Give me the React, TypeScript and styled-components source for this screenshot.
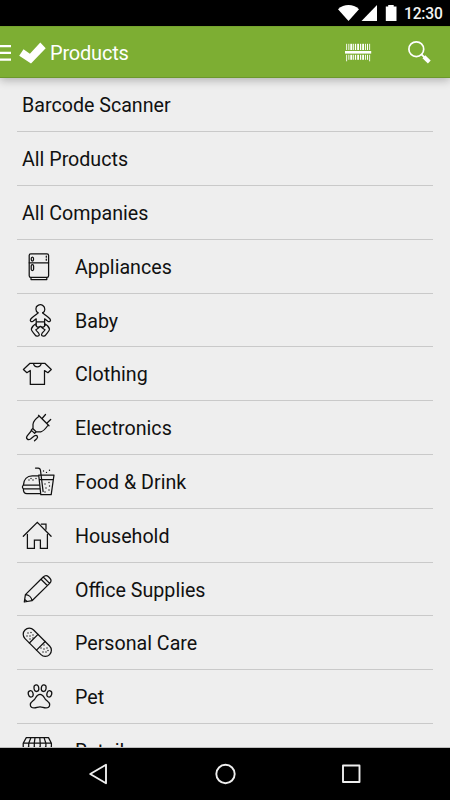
import React from "react";
import styled, { createGlobalStyle } from "styled-components";

const GlobalStyle = createGlobalStyle`
  * { box-sizing: border-box; }
  body { margin: 0; background: #000; font-family: Roboto, "Liberation Sans", sans-serif; }
`;

const Screen = styled.div`
  width: 450px;
  height: 800px;
  display: flex;
  flex-direction: column;
  overflow: hidden;
  background: #eeeeee;
`;

const StatusBar = styled.div`
  flex: 0 0 26px;
  background: #000;
  display: flex;
  align-items: center;
  justify-content: flex-end;
  padding: 2px 8px 0 0;
  color: #fff;
`;

const Clock = styled.span`
  font-size: 15.6px;
  line-height: 24px;
  font-weight: 500;
  letter-spacing: -0.2px;
  width: 38px;
  white-space: nowrap;
  color: #f4f4f4;
`;

const StatusIcons = styled.svg`
  width: 66px;
  height: 24px;
`;

const AppBar = styled.header`
  flex: 0 0 52.4px;
  display: flex;
  align-items: center;
  background: #7dae33;
  border-top: 1px solid #75a42e;
  border-bottom: 1px solid #6c982c;
  box-shadow: 0 2px 9px rgba(0, 0, 0, 0.28);
  z-index: 1;
`;

const Brand = styled.svg`
  width: 50px;
  height: 50px;
`;

const Title = styled.h1`
  flex: 1;
  margin: 0;
  font-size: 20px;
  line-height: 24px;
  font-weight: 400;
  letter-spacing: -0.2px;
  color: #fff;
  padding-top: 2px;
`;

const Actions = styled.svg`
  width: 110px;
  height: 50px;
`;

const List = styled.ul`
  flex: 1;
  min-height: 0;
  overflow: hidden;
  list-style: none;
  margin: 0;
  padding: 0 17px;
  border-bottom: 1px solid #bdbdbd;
`;

const Row = styled.li`
  height: 53.8px;
  padding-top: 1.2px;
  display: flex;
  align-items: center;
  border-bottom: 1px solid #c9c9c9;
`;

const Label = styled.span<{ $inset?: boolean }>`
  font-size: 19.65px;
  line-height: 26px;
  color: #111;
  white-space: nowrap;
  padding-top: 2.2px;
  padding-left: ${(p) => (p.$inset ? "17px" : "5px")};
`;

const Glyph = styled.svg`
  width: 40px;
  height: 44px;
  margin-left: 1px;
  fill: none;
  stroke: #111;
  stroke-width: 1.25;
  stroke-linejoin: round;
  stroke-linecap: round;
`;

const NavBar = styled.nav`
  flex: 0 0 52px;
  background: #000;
  display: flex;
  align-items: center;
  justify-content: space-between;
  padding: 0 86px;
`;

const NavIcon = styled.svg`
  width: 25px;
  height: 24px;
  fill: none;
  stroke: #eee;
  stroke-width: 1.9;
  stroke-linejoin: round;
`;

const dots = (points: number[][], r = 0.6) =>
  points.map(([x, y]) => <circle key={`${x}-${y}`} cx={x} cy={y} r={r} fill="#111" stroke="none" />);

const items: { label: string; icon?: React.ReactNode }[] = [
  { label: "Barcode Scanner" },
  { label: "All Products" },
  { label: "All Companies" },
  {
    label: "Appliances",
    icon: (
      <>
        <rect x="11.2" y="8.9" width="19.4" height="23.4" rx="1.6" />
        <path d="M11.2 17.8H30.6M13 32.5v2h15.8v-2M28.3 11v1.2M28.3 14v1.2" />
        <ellipse cx="14.4" cy="14" rx="1.2" ry="2" />
        <rect x="13.2" y="19.7" width="2.4" height="5.8" rx="1.2" />
      </>
    ),
  },
  {
    label: "Baby",
    icon: (
      <>
        <path d="M20 13.8C17.2 12 17.2 7.7 20 6.4c3.2-1.7 7 .2 6.8 4 0 1.6-.9 2.8-2.2 3.5" />
        <path d="M20 13.8C17.8 16.2 15.1 17.5 12.8 20c-1.4 1.8.5 3.4 2.2 2.2l3.2-2.4v6.9M24.8 13.8c2.2 2.4 4.9 3.7 7.2 6.2 1.4 1.8-.5 3.4-2.2 2.2l-3.2-2.4v6.9M18.2 22.8h8.5" />
        <path d="M18 24.8c-2 1-4.2 3-4.7 5.4-.2 1.5 2.2 3.6 3.7 5.6 1.5 2.4 5.3 1.2 4-1.1-.7-1.4-2.3-2.2-3.2-3.9 1.5-1.2 2.6-1.5 4.6-3.4 2 1.9 3.1 2.2 4.6 3.4-.9 1.7-2.5 2.5-3.2 3.9-1.3 2.3 2.5 3.5 4 1.1 1.5-2 3.9-4.1 3.7-5.6-.5-2.4-2.7-4.4-4.7-5.4M18 26.3c.6 2 2.3 2.4 4.4 1.1 2.1 1.3 3.8.9 4.6-1.1" />
      </>
    ),
  },
  {
    label: "Clothing",
    icon: (
      <path d="M12 11.3L5.4 17.5l3.5 3.2 3.4-2.2v13.9h14.2V18.5l3.4 2.2 3.4-3.2-6.5-6.2H12M15.4 11.3c1 4.6 6.8 4.6 7.9 0" />
    ),
  },
  {
    label: "Electronics",
    icon: (
      <path d="M20.5 9.3L31 19.8M21.3 10.1c-3 2.3-5.9 4.6-6.3 8.1v4.5l3.1 3.1h4.7c3-.6 5.3-3.8 7.4-6.8M24.5 12l3-3.5M29.3 16.7l3.4-3.2M14.8 22.3l-1.6 1.8 3.4 3.3 1.8-1.6M13.6 24.5l-4.4 5.3c-1.8 2.6.8 5 3.3 3.2l3.7-2.9c2.7-1.8 4.4.7 2.5 2.6l-2.2 2.1" />
    ),
  },
  {
    label: "Food & Drink",
    icon: (
      <>
        <path d="M20.2 15.9h-6c-5.2 0-8.5 3.6-8.8 9.2h16M5.4 25.2c-1.3 1-1.3 2.6 0 3.6h16.4M5.4 28.8c-.2 3 1 4.9 3.5 4.9h13" />
        <path d="M20.7 15h15.3l-2.8 19.7H22.8zM21.3 19.5h14M17.5 8h2.7c1.6 0 2.1.8 2.3 2.5l2.6 21" />
        {dots([[13, 18.5], [11, 20], [15, 20], [18, 18.5], [25.5, 11], [28.5, 12.4], [31.5, 10.2], [27, 24], [31, 22.5], [28, 28], [31, 30], [27, 32], [31.5, 26]], 0.7)}
      </>
    ),
  },
  {
    label: "Household",
    icon: (
      <path d="M5.3 22.3l14-14 13.8 14M9.4 20.4v14h7v-8.2h6v8.2h7v-14M23.3 10H28v5.2" strokeLinejoin="miter" />
    ),
  },
  {
    label: "Office Supplies",
    icon: (
      <path d="M6.3 34l1.1-7.4L25.2 9c2-2 3.8-1.7 5.3-.2l1.4 1.4c1.5 1.6 1.5 3.4-.2 5.2L14 32.7zM7.4 26.6c3.3.2 6.2 2.6 6.6 6.1M23 11.2l6.3 6.3M25.2 9l6.4 6.4M6.8 31.5l2.2 1.9" />
    ),
  },
  {
    label: "Personal Care",
    icon: (
      <>
        <g transform="rotate(45 19.3 21.3)">
          <rect x="1.9" y="15.2" width="34.8" height="12.2" rx="6.1" />
          <path d="M14.2 15.2v12.2M24.3 15.2v12.2" />
        </g>
        {dots([[10, 12], [13, 11.5], [9, 15], [12, 15], [15, 14], [12, 18], [15, 17], [23, 27], [26, 24], [26, 28], [29, 27], [25, 31], [28, 31], [30, 29.5]], 0.7)}
      </>
    ),
  },
  {
    label: "Pet",
    icon: (
      <>
        <ellipse cx="12.7" cy="18.9" rx="2.4" ry="3.2" transform="rotate(-15 12.7 18.9)" />
        <ellipse cx="18.4" cy="13.2" rx="2.4" ry="3.3" transform="rotate(-8 18.4 13.2)" />
        <ellipse cx="25.7" cy="13.2" rx="2.4" ry="3.3" transform="rotate(8 25.7 13.2)" />
        <ellipse cx="31.3" cy="18.9" rx="2.4" ry="3.2" transform="rotate(15 31.3 18.9)" />
        <path d="M22 19.3c-3.4 0-4 3.4-5.5 5.2-1.7 1.7-4.2 2.6-4.2 5.3 0 2.2 1.8 3.2 4 3.1 2.1 0 3.5-1 5.7-1s3.6 1 5.7 1c2.2.1 4-.9 4-3.1 0-2.7-2.5-3.6-4.2-5.3-1.5-1.8-2.1-5.2-5.5-5.2z" />
      </>
    ),
  },
  {
    label: "Retail",
    icon: (
      <path d="M8.3 8.6h22.2l2.9 5.7v3.2c-1 3-4.7 3-5.7 0-.8 3-4.9 3-5.7 0-.8 3-4.9 3-5.7 0-.8 3-4.9 3-5.7 0-.8 3-4.6 3-5.4 0v-3.2zM5.2 14.2h28.2M13 8.6l-2.3 5.6v3.3M17 8.6l-.7 5.6v3.3M21.8 8.6l.4 5.6v3.3M26 8.6l1.9 5.6v3.3M7 20v12h25V20" />
    ),
  },
];

const barcode = [
  [46.2, 0.9], [48.4, 0.9], [50.3, 2], [53.2, 0.9], [55, 1.1], [57.2, 1.8], [60, 1.2], [62.2, 1.8], [65, 0.9], [67, 1], [69.2, 0.9],
];

export default function App() {
  return (
    <>
      <GlobalStyle />
      <Screen>
        <StatusBar>
          <StatusIcons viewBox="338 2 66 24" fill="#fff">
            <path d="M338 9.2C344 3.6 353 3.6 359 9.2L348.5 21z" />
            <path d="M377 5v16h-15.5z" />
            <path d="M385.8 6.5h2.4V5h5.5v1.5h2.8V21h-10.7z" />
          </StatusIcons>
          <Clock>12:30</Clock>
        </StatusBar>
        <AppBar>
          <Brand viewBox="0 27 50 50" fill="#fff">
            <path d="M0 45h11v2.3H0zM0 51.8h11v2.3H0zM0 58.5h11v2.3H0z" />
            <path d="M19.2 55.7l4.3-6.4 6.4 4.4L40.3 42.5l5.4 5.8L31 63.5z" />
          </Brand>
          <Title>Products</Title>
          <Actions viewBox="340 27 110 50">
            <g fill="#fff" transform="translate(300 0)">
              {barcode.map(([x, w], i) => (
                <rect key={x} x={x} y="43.8" width={w} height={i === 0 || i === 10 ? 17.5 : 16} />
              ))}
              <rect x="45" y="50" width="26.2" height="4.8" fill="#7dae33" />
              <rect x="45" y="51" width="26.2" height="2.6" />
            </g>
            <g fill="none" stroke="#fff">
              <circle cx="416.3" cy="49.2" r="7.4" strokeWidth="1.7" />
              <path d="M421.5 54.4l3 3" strokeWidth="1.8" />
              <path d="M423.9 56.8l5.4 5.2" strokeWidth="4" />
            </g>
          </Actions>
        </AppBar>
        <List>
          {items.map(({ label, icon }) => (
            <Row key={label}>
              {icon && <Glyph viewBox="0 0 40 44">{icon}</Glyph>}
              <Label $inset={!!icon}>{label}</Label>
            </Row>
          ))}
        </List>
        <NavBar>
          <NavIcon viewBox="0 0 25 24">
            <path d="M20 2.8v18.4L4.2 12z" />
          </NavIcon>
          <NavIcon viewBox="0 0 25 24">
            <circle cx="12.5" cy="12" r="9.2" />
          </NavIcon>
          <NavIcon viewBox="0 0 25 24">
            <rect x="4" y="3.5" width="16.5" height="16.5" />
          </NavIcon>
        </NavBar>
      </Screen>
    </>
  );
}
